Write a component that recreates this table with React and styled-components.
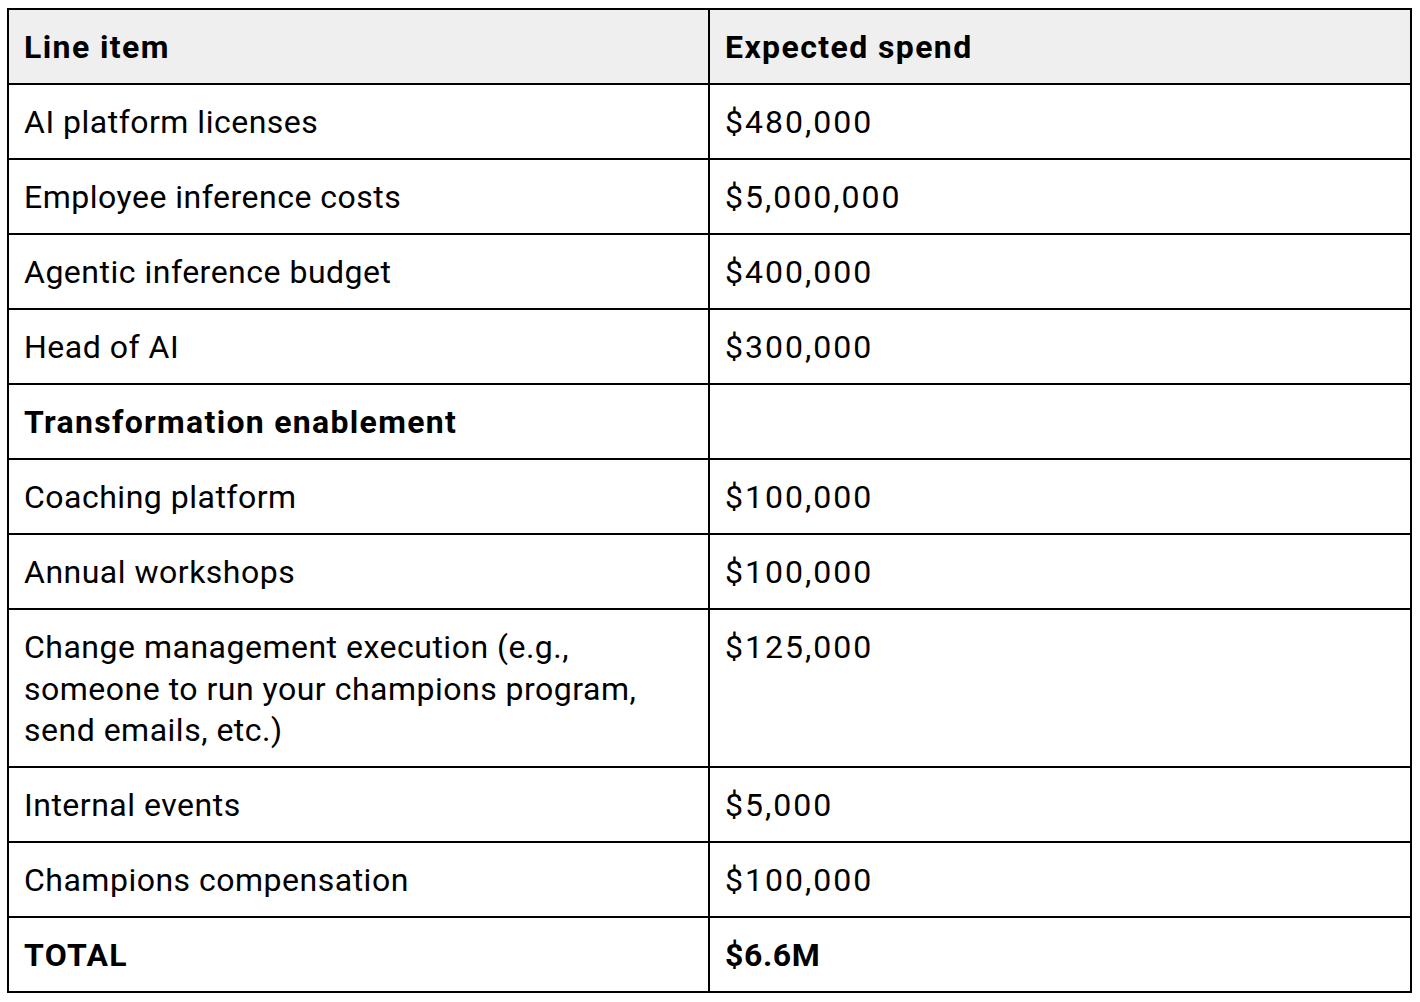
import React from 'react';
import styled, { createGlobalStyle } from 'styled-components';

const GlobalStyle = createGlobalStyle`
  body {
    margin: 0;
    background: #fff;
    font-family: Roboto, "Liberation Sans", sans-serif;
    color: #000;
  }
`;

const Page = styled.div`
  padding: 8px 0 0 7px;
`;

const Table = styled.table`
  width: 1405px;
  border-collapse: collapse;
  table-layout: fixed;
  border: 2px solid #000;
`;

const HeadCell = styled.th`
  background: #efefef;
  border: 2px solid #000;
  text-align: left;
  font-weight: 700;
  font-size: 32px;
  line-height: 41.5px;
  letter-spacing: 1.4px;
  padding: 17px 15px 14.5px;
  vertical-align: top;
`;

const Cell = styled.td`
  border: 2px solid #000;
  font-size: 32px;
  line-height: 41.5px;
  padding: 17px 15px 14.5px;
  vertical-align: top;
  font-weight: ${({ $bold }) => ($bold ? 700 : 400)};
  letter-spacing: ${({ $bold }) => ($bold ? '1.3px' : '0.5px')};
`;

const Amount = styled(Cell)`
  letter-spacing: ${({ $bold }) => ($bold ? '0.6px' : '2px')};
`;

const rows = [
  ['AI platform licenses', '$480,000'],
  ['Employee inference costs', '$5,000,000'],
  ['Agentic inference budget', '$400,000'],
  ['Head of AI', '$300,000'],
  ['Transformation enablement', '', true],
  ['Coaching platform', '$100,000'],
  ['Annual workshops', '$100,000'],
  [
    <>
      Change management execution (e.g.,
      <br />
      someone to run your champions program,
      <br />
      send emails, etc.)
    </>,
    '$125,000',
  ],
  ['Internal events', '$5,000'],
  ['Champions compensation', '$100,000'],
  ['TOTAL', '$6.6M', true],
];

export default function App() {
  return (
    <>
      <GlobalStyle />
      <Page>
        <Table>
          <colgroup>
            <col style={{ width: '701px' }} />
            <col />
          </colgroup>
          <thead>
            <tr>
              <HeadCell>Line item</HeadCell>
              <HeadCell>Expected spend</HeadCell>
            </tr>
          </thead>
          <tbody>
            {rows.map(([item, spend, bold], i) => (
              <tr key={i}>
                <Cell $bold={bold}>{item}</Cell>
                <Amount $bold={bold && i === rows.length - 1}>{spend}</Amount>
              </tr>
            ))}
          </tbody>
        </Table>
      </Page>
    </>
  );
}
